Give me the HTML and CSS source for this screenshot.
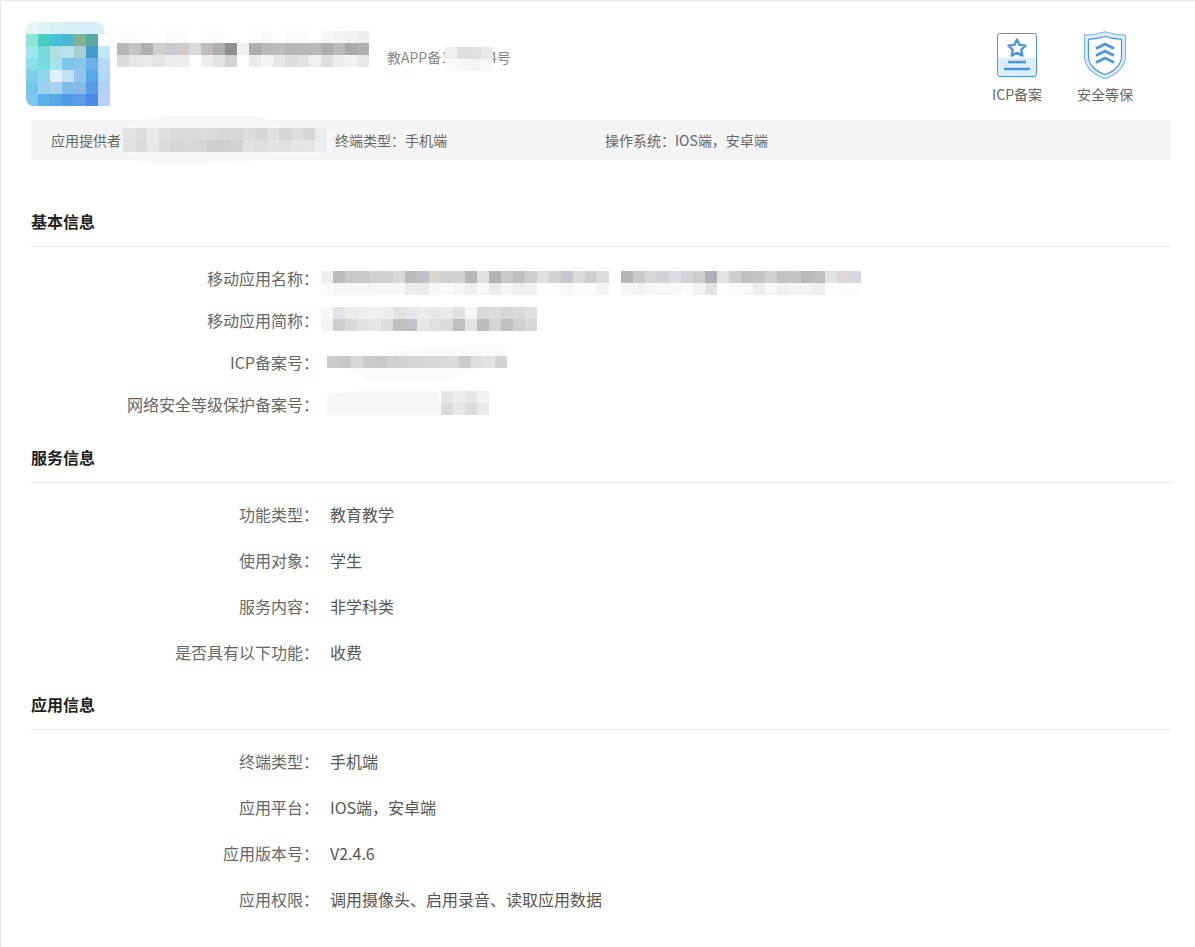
FILE: index.html
```html
<!DOCTYPE html>
<html lang="zh-CN">
<head>
<meta charset="utf-8">
<title>移动应用备案信息</title>
<link rel="stylesheet" href="styles.css">
</head>
<body>
<main class="page">
  <header class="head">
    <svg class="mosaic logo" width="84" height="84" viewBox="0 0 84 84" aria-hidden="true">
      <path d="M0 8q0-8 8-8h62q6 0 8 6l6 30v48H8q-8 0-8-8z" fill="#d8f0f5"/>
      <g>
        <rect x="0" y="0" fill="#e6f6f4"/><rect x="12" y="0" fill="#dff5f3"/><rect x="24" y="0" fill="#d8f1f5"/><rect x="36" y="0" fill="#d5eff6"/><rect x="48" y="0" fill="#d5eff7"/><rect x="60" y="0" fill="#d5eff8"/>
        <rect x="0" y="12" fill="#8fe3d8"/><rect x="12" y="12" fill="#4accc0"/><rect x="24" y="12" fill="#42c4d4"/><rect x="36" y="12" fill="#4cb8d0"/><rect x="48" y="12" fill="#85b08f"/><rect x="60" y="12" fill="#55aaa8"/><rect x="72" y="12" fill="#fff"/>
        <rect x="0" y="24" fill="#9ae8ea"/><rect x="12" y="24" fill="#7adadb"/><rect x="24" y="24" fill="#b0e0e4"/><rect x="36" y="24" fill="#b8e2ee"/><rect x="48" y="24" fill="#a8ccd2"/><rect x="60" y="24" fill="#459ccb"/><rect x="72" y="24" fill="#c8e6f6"/>
        <rect x="0" y="36" fill="#8adeeb"/><rect x="12" y="36" fill="#72dce2"/><rect x="24" y="36" fill="#a8e2ec"/><rect x="36" y="36" fill="#7cc4ea"/><rect x="48" y="36" fill="#88c4ea"/><rect x="60" y="36" fill="#6cb0ea"/><rect x="72" y="36" fill="#b4d8f5"/>
        <rect x="0" y="48" fill="#7ccfe8"/><rect x="12" y="48" fill="#8fd4ec"/><rect x="24" y="48" fill="#dff0fa"/><rect x="36" y="48" fill="#c0e0f5"/><rect x="48" y="48" fill="#90c5ee"/><rect x="60" y="48" fill="#5aa6e6"/><rect x="72" y="48" fill="#b4d6f6"/>
        <rect x="0" y="60" fill="#70c8ea"/><rect x="12" y="60" fill="#9cd2f0"/><rect x="24" y="60" fill="#a8d2f0"/><rect x="36" y="60" fill="#7dbcea"/><rect x="48" y="60" fill="#88b8e8"/><rect x="60" y="60" fill="#5a9ce4"/><rect x="72" y="60" fill="#b4d0f6"/>
        <rect x="0" y="72" fill="#7ec4ee"/><rect x="12" y="72" fill="#5cb0e8"/><rect x="24" y="72" fill="#58a8e8"/><rect x="36" y="72" fill="#4c9cea"/><rect x="48" y="72" fill="#5c9aea"/><rect x="60" y="72" fill="#4c8ae6"/><rect x="72" y="72" fill="#bcd0f6"/>
      </g>
    </svg>
    <div class="app-title">
      <svg class="mosaic title-blur" width="258" height="36" viewBox="0 0 258 36" aria-hidden="true">
        <rect x="0" y="0" fill="#fcfcfc"/><rect x="12" y="0" fill="#fcfcfc"/><rect x="24" y="0" fill="#fdfdfd"/><rect x="36" y="0" fill="#fff"/><rect x="48" y="0" fill="#fafafa"/><rect x="60" y="0" fill="#fcfbfb"/><rect x="72" y="0" fill="#fff"/><rect x="84" y="0" fill="#fcfcfc"/><rect x="96" y="0" fill="#fbfbfb"/><rect x="108" y="0" fill="#fff"/><rect x="120" y="0" fill="#fff"/><rect x="132" y="0" fill="#fdfcfb"/><rect x="144" y="0" fill="#f8fafa"/><rect x="156" y="0" fill="#fff"/><rect x="168" y="0" fill="#fafafa"/><rect x="180" y="0" fill="#fafafa"/><rect x="192" y="0" fill="#fff"/><rect x="204" y="0" fill="#f6f6f6"/><rect x="216" y="0" fill="#f4f4f4"/><rect x="228" y="0" fill="#f2f2f2"/><rect x="240" y="0" fill="#eeeeee"/>
        <rect x="0" y="12" fill="#b8b6b5"/><rect x="12" y="12" fill="#c4c3c2"/><rect x="24" y="12" fill="#b0b0b0"/><rect x="36" y="12" fill="#d2d0cf"/><rect x="48" y="12" fill="#c8cacd"/><rect x="60" y="12" fill="#d0cac8"/><rect x="72" y="12" fill="#d8dadb"/><rect x="84" y="12" fill="#c0bab8"/><rect x="96" y="12" fill="#aeaeb0"/><rect x="108" y="12" fill="#8e9092"/><rect x="120" y="12" fill="#f0f0ef"/><rect x="132" y="12" fill="#aeaeb0"/><rect x="144" y="12" fill="#bcbab8"/><rect x="156" y="12" fill="#bcbbbd"/><rect x="168" y="12" fill="#b8b6b4"/><rect x="180" y="12" fill="#bbb9b7"/><rect x="192" y="12" fill="#bcbab8"/><rect x="204" y="12" fill="#b0aeac"/><rect x="216" y="12" fill="#bcbbb9"/><rect x="228" y="12" fill="#aaa8aa"/><rect x="240" y="12" fill="#b0b0ae"/>
        <rect x="0" y="24" fill="#dddbd9"/><rect x="12" y="24" fill="#e6e7e8"/><rect x="24" y="24" fill="#e9eaeb"/><rect x="36" y="24" fill="#e6e5e5"/><rect x="48" y="24" fill="#ededed"/><rect x="60" y="24" fill="#eeecec"/><rect x="72" y="24" fill="#fff"/><rect x="84" y="24" fill="#efeced"/><rect x="96" y="24" fill="#e4e3e2"/><rect x="108" y="24" fill="#d2d3d2"/><rect x="120" y="24" fill="#fff"/><rect x="132" y="24" fill="#ececec"/><rect x="144" y="24" fill="#f4f4f4"/><rect x="156" y="24" fill="#e6e6e6"/><rect x="168" y="24" fill="#dcdddc"/><rect x="180" y="24" fill="#e2e2e2"/><rect x="192" y="24" fill="#f0f0f0"/><rect x="204" y="24" fill="#dedede"/><rect x="216" y="24" fill="#ededed"/><rect x="228" y="24" fill="#f3f3f3"/><rect x="240" y="24" fill="#e8e8e8"/>
      </svg>
      <div class="app-code">
        <span>教APP备1</span>
        <svg class="mosaic code-blur" width="48" height="24" viewBox="0 0 48 24" aria-hidden="true">
          <rect x="0" y="0" fill="#f0eeee"/><rect x="12" y="0" fill="#dedede"/><rect x="24" y="0" fill="#e0e0e2"/><rect x="36" y="0" fill="#e8e8e8"/>
          <rect x="0" y="12" fill="#fafafa"/><rect x="12" y="12" fill="#f6f6f6"/><rect x="24" y="12" fill="#f4f4f5"/><rect x="36" y="12" fill="#f8f8f8"/>
        </svg>
        <span>4号</span>
      </div>
    </div>
    <div class="badges">
      <div class="badge">
        <svg class="badge-icon" width="48" height="48" viewBox="0 0 48 48" aria-hidden="true">
          <rect x="4.5" y="2.5" width="39" height="43" rx="2.5" fill="#fff"/>
          <path d="M5 27h38v16a2 2 0 0 1-2 2H7a2 2 0 0 1-2-2z" fill="#deedfd"/>
          <rect x="4.5" y="2.5" width="39" height="43" rx="2.5" fill="none" stroke="#4a96e6"/>
          <path d="M24 8.500l2.600 5.400 5.900.8-4.300 4.100 1.100 5.900-5.300-2.800-5.300 2.800 1.100-5.900-4.300-4.100 5.900-.8z" fill="none" stroke="#4a96e6" stroke-width="2.400" stroke-linejoin="round"/>
          <path d="M15 31h18M11 38h26" stroke="#4a96e6" stroke-width="2.600"/>
        </svg>
        <span>ICP备案</span>
      </div>
      <div class="badge">
        <svg class="badge-icon" width="48" height="48" viewBox="0 0 48 48" aria-hidden="true">
          <path d="M24 .8C31 3 37 4 44.500 4.200V25C44.500 36 35 44 24 47.500 13 44 3.500 36 3.500 25V4.200C11 4 17 3 24 .8z" fill="#deedfd" stroke="#7db5ee" stroke-width="1.200"/>
          <path d="M24 5.500C30 7.300 35 8 40.500 8.300V25C40.500 34 33 40.500 24 43.500 15 40.500 7.500 34 7.500 25V8.300C13 8 18 7.300 24 5.500z" fill="#fff" stroke="#4a96e6" stroke-width="1.200"/>
          <path d="M15 17.500l9-4.500 9 4.500M15 24.500l9-4.500 9 4.500M15 31.500l9-4.500 9 4.500" fill="none" stroke="#4a96e6" stroke-width="2.800"/>
        </svg>
        <span>安全等保</span>
      </div>
    </div>
  </header>

  <div class="summary">
    <div class="summary-item provider">
      <span>应用提供者</span>
      <svg class="mosaic provider-blur" width="214" height="48" viewBox="0 0 214 48" aria-hidden="true">
        <path d="M4 10Q20 1 60 0h70q20 2 32 10l50 6v22l-50 4Q90 48 40 47 6 46 2 36z" fill="#f6f6f6"/>
        <rect x="2" y="12" fill="#e4e3e3"/><rect x="14" y="12" fill="#dedcde"/><rect x="26" y="12" fill="#eaeaea"/><rect x="38" y="12" fill="#e0dfdf"/><rect x="50" y="12" fill="#dbdad9"/><rect x="62" y="12" fill="#dadad9"/><rect x="74" y="12" fill="#dcdcdb"/><rect x="86" y="12" fill="#dbdbda"/><rect x="98" y="12" fill="#d8d6d8"/><rect x="110" y="12" fill="#d8d6d9"/><rect x="122" y="12" fill="#dcdcdc"/><rect x="134" y="12" fill="#d6d6d6"/><rect x="146" y="12" fill="#e0e0e0"/><rect x="158" y="12" fill="#d8d6d4"/><rect x="170" y="12" fill="#dddddd"/><rect x="182" y="12" fill="#d8d6d4"/><rect x="194" y="12" fill="#ebeced"/>
        <rect x="2" y="24" fill="#e2e1e1"/><rect x="14" y="24" fill="#dcdada"/><rect x="26" y="24" fill="#e8e8e8"/><rect x="38" y="24" fill="#dadada"/><rect x="50" y="24" fill="#d6d5d5"/><rect x="62" y="24" fill="#d8d8d7"/><rect x="74" y="24" fill="#d6d6d5"/><rect x="86" y="24" fill="#cfcdcd"/><rect x="98" y="24" fill="#d0ced0"/><rect x="110" y="24" fill="#d4d2d4"/><rect x="122" y="24" fill="#e2e2e2"/><rect x="134" y="24" fill="#dedede"/><rect x="146" y="24" fill="#e2e2e2"/><rect x="158" y="24" fill="#e0e0de"/><rect x="170" y="24" fill="#e4e4e4"/><rect x="182" y="24" fill="#e6e6e4"/><rect x="194" y="24" fill="#ecedf0"/>
      </svg>
    </div>
    <div class="summary-item terminal">终端类型：手机端</div>
    <div class="summary-item">操作系统：IOS端，安卓端</div>
  </div>

  <section class="section">
    <h2 class="section-title">基本信息</h2>
    <dl class="rows rows-basic">
      <div class="row row-basic">
        <dt>移动应用名称：</dt>
        <dd class="blur-cell name-cell">
          <svg class="mosaic" width="552" height="24" viewBox="-12 0 552 24" aria-hidden="true">
            <rect x="-12" y="0" fill="#efefef"/><rect x="-12" y="12" fill="#fafafa"/>
            <rect x="0" y="0" fill="#bcbcbe"/><rect x="12" y="0" fill="#c8c8c8"/><rect x="24" y="0" fill="#c8c8c8"/><rect x="36" y="0" fill="#cfcfcf"/><rect x="48" y="0" fill="#d0d0d0"/><rect x="60" y="0" fill="#d8d8d8"/><rect x="72" y="0" fill="#bcbab8"/><rect x="84" y="0" fill="#c0c0c4"/><rect x="96" y="0" fill="#d8d4d2"/><rect x="108" y="0" fill="#d0d0d0"/><rect x="120" y="0" fill="#d0d2d2"/><rect x="132" y="0" fill="#b8b6b4"/><rect x="144" y="0" fill="#e0e2e2"/><rect x="156" y="0" fill="#b4b2b0"/><rect x="168" y="0" fill="#c8c8ca"/><rect x="180" y="0" fill="#c0bec0"/><rect x="192" y="0" fill="#ccced0"/><rect x="204" y="0" fill="#e0dfdc"/><rect x="216" y="0" fill="#d2d3d0"/><rect x="228" y="0" fill="#c6c8cc"/><rect x="240" y="0" fill="#dadada"/><rect x="252" y="0" fill="#d0cecb"/><rect x="264" y="0" fill="#dcdce0"/><rect x="288" y="0" fill="#b8b7b4"/><rect x="300" y="0" fill="#ccc8c6"/><rect x="312" y="0" fill="#d6d7da"/><rect x="324" y="0" fill="#d2d3d8"/><rect x="336" y="0" fill="#dddddd"/><rect x="348" y="0" fill="#d2d3d8"/><rect x="360" y="0" fill="#cfcdca"/><rect x="372" y="0" fill="#b0b0b6"/><rect x="384" y="0" fill="#e4e3e1"/><rect x="396" y="0" fill="#cecece"/><rect x="408" y="0" fill="#c0c0c0"/><rect x="420" y="0" fill="#c8c6c4"/><rect x="432" y="0" fill="#ced0d4"/><rect x="444" y="0" fill="#c4c2be"/><rect x="456" y="0" fill="#c4c4c6"/><rect x="468" y="0" fill="#b8bab8"/><rect x="480" y="0" fill="#bebebe"/><rect x="492" y="0" fill="#e2e4e2"/><rect x="504" y="0" fill="#dcd8d6"/><rect x="516" y="0" fill="#d4d8dc"/>
            <rect x="0" y="12" fill="#f5f6f6"/><rect x="12" y="12" fill="#f5f6f6"/><rect x="24" y="12" fill="#f6f6f6"/><rect x="36" y="12" fill="#f6f6f6"/><rect x="48" y="12" fill="#f7f7f7"/><rect x="60" y="12" fill="#f7f7f7"/><rect x="72" y="12" fill="#ebecec"/><rect x="84" y="12" fill="#e8eaec"/><rect x="96" y="12" fill="#f5f6f7"/><rect x="108" y="12" fill="#fafafa"/><rect x="120" y="12" fill="#f4f5f5"/><rect x="132" y="12" fill="#efefef"/><rect x="144" y="12" fill="#f8f8f8"/><rect x="156" y="12" fill="#ebebeb"/><rect x="168" y="12" fill="#f4f5f5"/><rect x="180" y="12" fill="#efefef"/><rect x="192" y="12" fill="#eff1f0"/><rect x="204" y="12" fill="#fdfdfd"/><rect x="216" y="12" fill="#fcfcfa"/><rect x="228" y="12" fill="#f6f8f8"/><rect x="240" y="12" fill="#fafbfa"/><rect x="252" y="12" fill="#fcfcfc"/><rect x="264" y="12" fill="#f4f4f4"/><rect x="288" y="12" fill="#f6f6f6"/><rect x="300" y="12" fill="#f3f3f4"/><rect x="312" y="12" fill="#f6f7f9"/><rect x="324" y="12" fill="#f7f8fa"/><rect x="336" y="12" fill="#f9f9fa"/><rect x="348" y="12" fill="#fcfcfc"/><rect x="360" y="12" fill="#f2f2f0"/><rect x="372" y="12" fill="#e2e2e4"/><rect x="384" y="12" fill="#fefefc"/><rect x="396" y="12" fill="#fbfbfb"/><rect x="408" y="12" fill="#f8f8f6"/><rect x="420" y="12" fill="#eeeeef"/><rect x="432" y="12" fill="#f8f8f8"/><rect x="444" y="12" fill="#f0f0ee"/><rect x="456" y="12" fill="#f3f5f5"/><rect x="468" y="12" fill="#f3f5f5"/><rect x="480" y="12" fill="#eeeeec"/><rect x="492" y="12" fill="#fdfefd"/><rect x="504" y="12" fill="#fbfbfb"/><rect x="516" y="12" fill="#fbfbfb"/>
          </svg>
        </dd>
      </div>
      <div class="row row-basic">
        <dt>移动应用简称：</dt>
        <dd class="blur-cell short-cell">
          <svg class="mosaic" width="216" height="24" viewBox="0 0 216 24" aria-hidden="true">
            <rect x="0" y="0" fill="#f6f6f6"/><rect x="12" y="0" fill="#e2e3e6"/><rect x="24" y="0" fill="#ececec"/><rect x="36" y="0" fill="#eeeeee"/><rect x="48" y="0" fill="#f0f0f0"/><rect x="60" y="0" fill="#efeeec"/><rect x="72" y="0" fill="#e4e2e0"/><rect x="84" y="0" fill="#e4e6ea"/><rect x="96" y="0" fill="#edebec"/><rect x="108" y="0" fill="#e8e8ea"/><rect x="120" y="0" fill="#eaecec"/><rect x="132" y="0" fill="#e2e2e2"/><rect x="144" y="0" fill="#f6f6f6"/><rect x="156" y="0" fill="#d8d8d8"/><rect x="168" y="0" fill="#dcdcdc"/><rect x="180" y="0" fill="#d6d6d6"/><rect x="192" y="0" fill="#dadadc"/><rect x="204" y="0" fill="#e0e0e0"/>
            <rect x="0" y="12" fill="#f4f4f4"/><rect x="12" y="12" fill="#cfcfcf"/><rect x="24" y="12" fill="#dadada"/><rect x="36" y="12" fill="#e2e2e2"/><rect x="48" y="12" fill="#e6e6e6"/><rect x="60" y="12" fill="#dddddd"/><rect x="72" y="12" fill="#c2c0be"/><rect x="84" y="12" fill="#c0c2c8"/><rect x="96" y="12" fill="#e6e5e6"/><rect x="108" y="12" fill="#e0e0e2"/><rect x="120" y="12" fill="#d8dadb"/><rect x="132" y="12" fill="#c0bebc"/><rect x="144" y="12" fill="#e4e4e4"/><rect x="156" y="12" fill="#bcbcbc"/><rect x="168" y="12" fill="#d4d4d4"/><rect x="180" y="12" fill="#c0c0c0"/><rect x="192" y="12" fill="#cfcfd2"/><rect x="204" y="12" fill="#d8d8d8"/>
          </svg>
        </dd>
      </div>
      <div class="row row-basic">
        <dt>ICP备案号：</dt>
        <dd class="blur-cell icp-cell">
          <svg class="mosaic" width="180" height="36" viewBox="0 0 180 36" aria-hidden="true">
            <path d="M30 12Q90 2 178 0v12zM20 24h130l-30 12H40z" fill="#fafafa"/>
            <rect x="0" y="12" fill="#cccccc"/><rect x="12" y="12" fill="#c8c8c8"/><rect x="24" y="12" fill="#d8d8d6"/><rect x="36" y="12" fill="#cccccc"/><rect x="48" y="12" fill="#c8c8c8"/><rect x="60" y="12" fill="#d0d0d2"/><rect x="72" y="12" fill="#d4d4d4"/><rect x="84" y="12" fill="#d6d6d6"/><rect x="96" y="12" fill="#d8d8d8"/><rect x="108" y="12" fill="#d8d8d8"/><rect x="120" y="12" fill="#dadada"/><rect x="132" y="12" fill="#cbcbcb"/><rect x="144" y="12" fill="#dcdee0"/><rect x="156" y="12" fill="#e2e2e2"/><rect x="168" y="12" fill="#d4d4d4"/>
          </svg>
        </dd>
      </div>
      <div class="row row-basic">
        <dt>网络安全等级保护备案号：</dt>
        <dd class="blur-cell sec-cell">
          <svg class="mosaic" width="162" height="24" viewBox="0 0 162 24" aria-hidden="true">
            <path d="M4 3Q14 0 60 0h50q4 6 4 24H0V6z" fill="#f6f6f5"/>
            <rect x="114" y="0" fill="#e6e6e6"/><rect x="126" y="0" fill="#ececec"/><rect x="138" y="0" fill="#e6e6e8"/><rect x="150" y="0" fill="#f0f0f0"/>
            <rect x="114" y="12" fill="#dcdcde"/><rect x="126" y="12" fill="#e8e8e8"/><rect x="138" y="12" fill="#dcdce0"/><rect x="150" y="12" fill="#eaeaea"/>
          </svg>
        </dd>
      </div>
    </dl>
  </section>

  <section class="section">
    <h2 class="section-title">服务信息</h2>
    <dl class="rows">
      <div class="row"><dt>功能类型：</dt><dd>教育教学</dd></div>
      <div class="row"><dt>使用对象：</dt><dd>学生</dd></div>
      <div class="row"><dt>服务内容：</dt><dd>非学科类</dd></div>
      <div class="row"><dt>是否具有以下功能：</dt><dd>收费</dd></div>
    </dl>
  </section>

  <section class="section">
    <h2 class="section-title">应用信息</h2>
    <dl class="rows">
      <div class="row"><dt>终端类型：</dt><dd>手机端</dd></div>
      <div class="row"><dt>应用平台：</dt><dd>IOS端，安卓端</dd></div>
      <div class="row"><dt>应用版本号：</dt><dd>V2.4.6</dd></div>
      <div class="row"><dt>应用权限：</dt><dd>调用摄像头、启用录音、读取应用数据</dd></div>
    </dl>
  </section>
</main>
</body>
</html>
```
FILE: styles.css
```css
* { box-sizing: border-box; }

html, body { margin: 0; height: 100%; background: #fff; }

body {
  font-family: "Noto Sans CJK SC", "Liberation Sans", sans-serif;
  color: #666;
  overflow: hidden;
}

.page {
  min-height: 100%;
  padding: 0 24px 0 30px;
  border-top: 1px solid #e6e6e6;
  border-left: 1px solid #e6e6e6;
}

.mosaic { display: block; flex: none; shape-rendering: crispEdges; }
.mosaic rect { width: 12px; height: 12px; }

.head {
  display: flex;
  align-items: flex-start;
  height: 119px;
}

.logo { margin: 21px 7px 0 -5px; border-radius: 8px 8px 0 8px; }

.app-title {
  display: flex;
  align-items: flex-start;
  margin: 30px 0 0 0;
}

.app-code {
  display: flex;
  align-items: center;
  margin: 12px 0 0 12px;
  font-size: 14px;
  color: #888;
  line-height: 20px;
}

.code-blur {
  position: relative;
  z-index: 1;
  margin: 4px -4px 0 -4px;
}

.badges {
  display: flex;
  gap: 35px;
  margin: 30px 38px 0 auto;
}

.badge {
  display: flex;
  flex-direction: column;
  align-items: center;
  font-size: 14px;
  line-height: 20px;
  color: #666;
  gap: 5px;
  white-space: nowrap;
}

.badge-icon { display: block; }

.summary {
  display: flex;
  align-items: center;
  height: 40px;
  padding-left: 20px;
  background: #f4f4f4;
  font-size: 14px;
  color: #666;
}

.summary-item { display: flex; align-items: center; white-space: nowrap; }
.provider { width: 284px; }
.terminal { width: 270px; }

.section-title {
  margin: 0;
  height: 47px;
  padding-top: 10px;
  font-size: 16px;
  line-height: 22px;
  font-weight: 700;
  color: #222;
  border-bottom: 1px solid #e8e8e8;
}

.section:first-of-type { margin-top: 40px; }

.rows { margin: 0; padding: 8px 0; }
.rows-basic { padding: 10px 0 11px; }

.row {
  display: grid;
  grid-template-columns: 288px 1fr;
  column-gap: 11px;
  align-items: center;
  height: 46px;
  font-size: 16px;
  color: #666;
}

.row-basic { height: 42px; }

.row dt { text-align: right; white-space: nowrap; }
.row dd { margin: 0; color: #555; }

.row .blur-cell { display: flex; align-items: center; }
.row .name-cell { margin: 10px 0 0 -9px; }
.row .short-cell { margin: 0 0 2px -9px; }
.row .icp-cell { margin: 0 0 0 -3px; }
.row .sec-cell { margin: 0 0 2px -3px; }
```
